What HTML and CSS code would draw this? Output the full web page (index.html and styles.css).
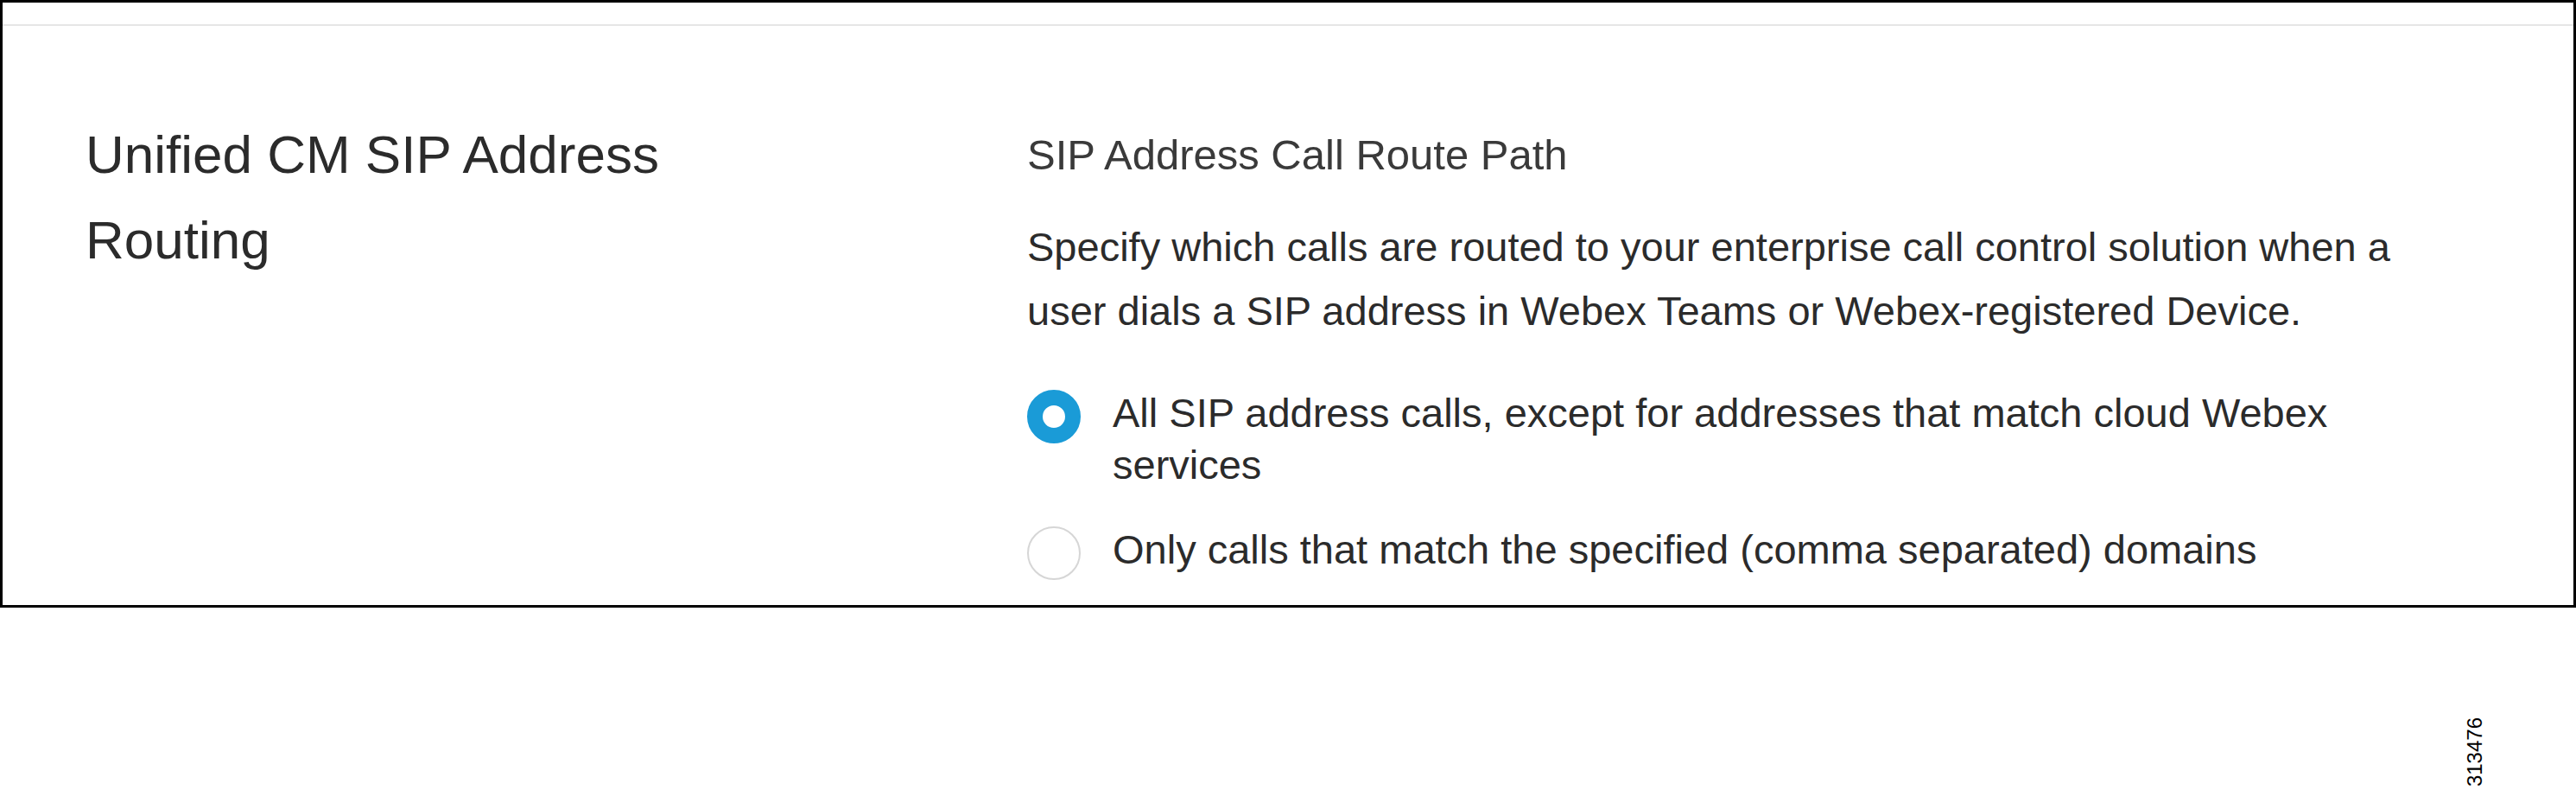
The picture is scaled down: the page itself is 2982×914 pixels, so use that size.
FILE: index.html
```html
<!DOCTYPE html>
<html lang="en">
<head>
    <meta charset="UTF-8">
    <meta name="viewport" content="width=device-width, initial-scale=1.0">
    <title>Unified CM SIP Address Routing</title>
    <link rel="stylesheet" href="styles.css">
</head>
<body>
    <div class="frame">
        <div class="topbar"></div>

        <div class="section">
            <div class="section-head">
                <h2 class="section-title">Unified CM SIP Address Routing</h2>
            </div>

            <div class="section-body">
                <h3 class="field-title">SIP Address Call Route Path</h3>
                <p class="field-help">Specify which calls are routed to your enterprise call control solution when a user dials a SIP address in Webex Teams or Webex-registered Device.</p>

                <label class="radio-option">
                    <input type="radio" name="routePath" value="all" checked>
                    <span class="radio-mark"></span>
                    <span class="radio-label">All SIP address calls, except for addresses that match cloud Webex services</span>
                </label>

                <label class="radio-option">
                    <input type="radio" name="routePath" value="domains">
                    <span class="radio-mark"></span>
                    <span class="radio-label">Only calls that match the specified (comma separated) domains</span>
                </label>
            </div>
        </div>
    </div>

    <div class="figure-footer">
        <span class="figure-id">313476</span>
    </div>
</body>
</html>
```

FILE: styles.css
```css
body {
    font-family: 'Liberation Sans', Arial, sans-serif;
    background-color: #ffffff;
    color: #2b2b2b;
    margin: 0;
    width: 2982px;
}
.frame {
    box-sizing: border-box;
    width: 2982px;
    height: 703px;
    border: 3px solid #000000;
    background: white;
    overflow: hidden;
}
.topbar {
    height: 25px;
    border-bottom: 2px solid #e6e6e6;
}
.section {
    display: flex;
    padding: 99px 0 0 96px;
}
.section-head {
    width: 1090px;
    flex: none;
}
.section-title {
    max-width: 820px;
    margin: 0;
    font-size: 62px;
    font-weight: normal;
    line-height: 99px;
    color: #2b2b2b;
}
.section-body {
    width: 1640px;
    padding-top: 20px;
}
.field-title {
    margin: 0;
    font-size: 49px;
    font-weight: normal;
    line-height: 60px;
    color: #3a3a3a;
}
.field-help {
    margin: 40px 0 51px;
    font-size: 47px;
    line-height: 74px;
}
.radio-option {
    display: flex;
    align-items: flex-start;
    gap: 37px;
    font-size: 47px;
    line-height: 60px;
    margin-bottom: 38px;
    cursor: pointer;
}
.radio-option input {
    display: none;
}
.radio-mark {
    flex: none;
    box-sizing: border-box;
    width: 62px;
    height: 62px;
    margin-top: 3px;
    border: 2px solid #d6d6d6;
    border-radius: 50%;
    background: white;
}
.radio-option input:checked + .radio-mark {
    border: 18px solid #1a9bd7;
}
.figure-footer {
    display: flex;
    justify-content: flex-end;
    padding: 127px 105px 0 0;
}
.figure-id {
    writing-mode: vertical-rl;
    transform: rotate(180deg);
    font-size: 24px;
    line-height: 24px;
    color: #000000;
}
```
